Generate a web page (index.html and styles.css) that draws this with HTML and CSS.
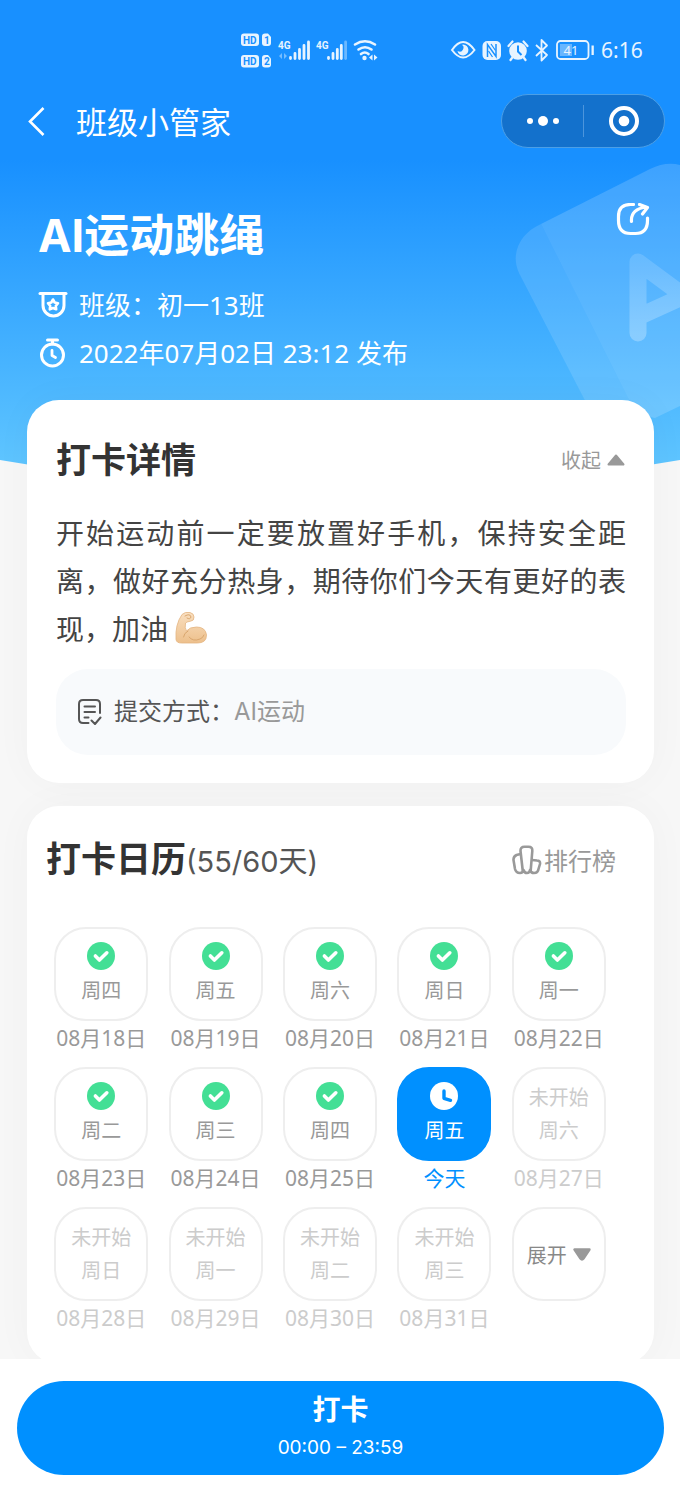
FILE: index.html
```html
<!DOCTYPE html>
<html lang="zh-CN">
<head>
<meta charset="utf-8">
<meta name="viewport" content="width=device-width, initial-scale=1">
<title>班级小管家</title>
<link rel="stylesheet" href="styles.css">
</head>
<body>
<svg class="defs" aria-hidden="true">
  <symbol id="done" viewBox="0 0 28 28"><circle cx="14" cy="14" r="14" fill="#43df95"/><path d="M8.400 14l4 4 7.400-7.200" fill="none" stroke="#fff" stroke-width="3.600" stroke-linecap="round" stroke-linejoin="round"/></symbol>
  <symbol id="clock" viewBox="0 0 28 28"><circle cx="14" cy="14" r="14" fill="#fff"/><path d="M14 9v7.300l6.500 2" fill="none" stroke="#0090ff" stroke-width="3.400" stroke-linecap="round" stroke-linejoin="round"/></symbol>
</svg>
<header class="hero">
  <svg class="hero-art" width="170" height="260" viewBox="510 160 170 260" aria-hidden="true">
    <defs><linearGradient id="ga" x1="0" y1="0" x2="0" y2="1"><stop offset="0" stop-color="#fff" stop-opacity=".14"/><stop offset="1" stop-color="#fff" stop-opacity=".26"/></linearGradient></defs>
    <path d="M541 224C520 233 510 254 519 273L592 414H636Z" fill="#fff" fill-opacity=".12"/>
    <path d="M541 224L650 169Q666 161 680 165V406L655 418L636 414Z" fill="#fff" fill-opacity=".16"/>
    <path d="M638 333V262L684 296L638 317" fill="none" stroke="url(#ga)" stroke-width="17" stroke-linecap="round" stroke-linejoin="round"/>
  </svg>
  <div class="status">
    <svg width="140" height="40" viewBox="240 30 140 40" aria-hidden="true">
      <g fill="#e8f4ff">
        <rect x="241" y="33.500" width="18" height="12.500" rx="3"/><path d="M262 36.500q0-3 3-3h3l3 3.500v6q0 3-3 3h-3q-3 0-3-3z"/>
        <rect x="241" y="55" width="18" height="12.500" rx="3"/><path d="M262 58q0-3 3-3h3l3 3.500v6q0 3-3 3h-3q-3 0-3-3z"/>
      </g>
      <g class="badge-text" fill="#1890ff"><text x="243" y="43.500">HD</text><text x="264" y="43.500">1</text><text x="243" y="65">HD</text><text x="264" y="65">2</text></g>
      <g class="net-text" fill="#e8f4ff"><text x="278" y="49">4G</text><text x="316" y="49">4G</text></g>
      <g stroke="#e8f4ff" stroke-width="2.800" stroke-linecap="round">
        <path d="M290.500 57.500v1M295 53.500v5M299.500 49.500v9M304 45.500v13M308.500 42v16.500M328.500 57.500v1M333 53.500v5M337.300 49.500v9M341.300 45.500v13"/>
        <path d="M345.600 42v16.500" opacity=".4"/>
      </g>
      <path d="M282 53v6l-3-3zM284 53v6l3-3z" fill="#e8f4ff" opacity=".45"/>
      <g fill="none" stroke="#e8f4ff" stroke-width="2.600" stroke-linecap="round"><path d="M355 44.500q10-6.500 20 0M358.500 49.500q6.500-4.500 13 0M361 54q3.800-3 7.500 0"/></g>
      <circle cx="364.500" cy="58" r="2.200" fill="#e8f4ff"/><path d="M372.500 54.500v6l-3.500-3zM374 54.500v6l3.500-3z" fill="#e8f4ff"/>
    </svg>
    <svg class="status-right" width="144" height="40" viewBox="450 30 144 40" role="img" aria-label="电量 41">
      <path d="M452 50q11-16 22.500 0q-11.500 15-22.500 0z" fill="none" stroke="#e8f4ff" stroke-width="2"/><path d="M463 44.500a5.500 5.500 0 1 1-5.500 6.500q4 2 5.500-1.500t-1-4.500z" fill="#e8f4ff"/>
      <rect x="482.500" y="41" width="18.500" height="19" rx="5" fill="#e8f4ff"/><path d="M487.500 57V44.500L496 56.500V44" fill="none" stroke="#1890ff" stroke-width="1.500"/><path d="M491 44l4.500 6.500M488.500 51l4 6" stroke="#1890ff" stroke-width="1.200"/>
      <circle cx="518" cy="51" r="8.800" fill="#e8f4ff"/><path d="M508.500 46l4-4.500M527.500 46l-4-4.500M512 58l-1.500 2M524 58l1.500 2" stroke="#e8f4ff" stroke-width="2.200" stroke-linecap="round"/><path d="M518 45.500v6l3.500 3.500" fill="none" stroke="#1890ff" stroke-width="2"/>
      <path d="M536 45l11 10-5.500 5.500V40l5.500 5.500L536 56" fill="none" stroke="#e8f4ff" stroke-width="1.800" stroke-linejoin="round"/>
      <rect x="557" y="41" width="31.500" height="18" rx="3.500" fill="none" stroke="#e8f4ff" stroke-width="1.800"/><rect x="560" y="44" width="12" height="12" fill="#fff" opacity=".35"/><rect x="591.500" y="45.500" width="2.300" height="9.500" fill="#e8f4ff"/>
      <text class="battery-text" x="563.500" y="55" fill="#e8f4ff">41</text>
    </svg>
    <time class="status-time">6:16</time>
  </div>
  <nav class="nav">
    <button class="icon-btn" type="button" aria-label="返回"><svg width="20" height="32" viewBox="0 0 20 32"><path d="M17.500 3L4 16.500 17.500 30" fill="none" stroke="#fff" stroke-width="2.600"/></svg></button>
    <span class="nav-title">班级小管家</span>
    <div class="capsule">
      <button class="icon-btn" type="button" aria-label="更多"><svg width="34" height="30" viewBox="0 0 34 30" fill="#fff"><circle cx="4" cy="15" r="3"/><circle cx="17" cy="15" r="5"/><circle cx="30" cy="15" r="3"/></svg></button>
      <button class="icon-btn" type="button" aria-label="关闭"><svg width="30" height="30" viewBox="0 0 30 30"><circle cx="15" cy="15" r="13" fill="none" stroke="#fff" stroke-width="4"/><circle cx="15" cy="15" r="5.300" fill="#fff"/></svg></button>
    </div>
  </nav>
  <div class="intro">
    <div class="intro-top">
      <h1>AI运动跳绳</h1>
      <button class="icon-btn share" type="button" aria-label="分享"><svg width="36" height="36" viewBox="616 203 36 36" fill="none" stroke="#fff" stroke-width="3.200" stroke-linecap="round" stroke-linejoin="round"><path d="M633.500 204.500h-3q-12 0-12 12v4q0 13 12 13h5q12 0 12-13v-2.500"/><path d="M631.500 221.500q-1-12.500 15-14.500M639.500 204.500l8 3-5 6.500"/></svg></button>
    </div>
    <p class="meta"><svg width="30" height="30" viewBox="0 0 30 30" fill="none" stroke="#fff" stroke-linecap="round" stroke-linejoin="round"><path d="M2 3.500h26" stroke-width="3"/><path d="M5 4v11.500a10.500 10.500 0 0 0 21 0V4" stroke-width="3"/><path d="M15 9.500l1.700 3 3.300.7-2.200 2.700.4 3.400L15 18l-3.200 1.300.4-3.400-2.200-2.700 3.300-.7z" stroke-width="2.600"/></svg><span>班级：初一13班</span></p>
    <p class="meta"><svg width="30" height="30" viewBox="0 0 30 30" fill="none" stroke="#fff" stroke-linecap="round" stroke-linejoin="round"><circle cx="14.500" cy="17" r="11" stroke-width="3"/><path d="M9.500 2h10M14.500 3v3" stroke-width="3"/><path d="M14 12.500v5l3.500 2" stroke-width="2.800"/></svg><span>2022年07月02日 23:12 发布</span></p>
  </div>
</header>
<main class="content">
  <section class="card detail">
    <div class="card-head">
      <h2>打卡详情</h2>
      <button class="text-btn" type="button">收起<svg width="18" height="12" viewBox="0 0 18 12"><path d="M9 1.500L16.500 10.500H1.500Z" fill="#999" stroke="#999" stroke-width="2" stroke-linejoin="round"/></svg></button>
    </div>
    <p class="desc">开始运动前一定要放置好手机，保持安全距离，做好充分热身，期待你们今天有更好的表现，加油 <svg class="arm" width="34" height="34" viewBox="176 611 34 34" role="img" aria-label="加油"><defs><linearGradient id="skin" x1="0" y1="0" x2="0" y2="1"><stop offset="0" stop-color="#f9dfc0"/><stop offset="1" stop-color="#edc08c"/></linearGradient></defs><path d="M184 614.500q3-3 8-2q4 1 4 4.500q0 4-3 4q-5 1-5.500 2q-1 5 1 8q3-4 10-4q9 0 10 8q0 8-9 8h-16q-5 0-5.500-3.500q-1-15 6-25z" fill="url(#skin)" stroke="#e3b480" stroke-width=".8"/><path d="M187 616q5-3 6 1q-1 3-4 1M190 631q-4 2-4.500 6M191 637q4 5 11 2q3-1 4-4" fill="none" stroke="#d9a66e" stroke-width="1" stroke-linecap="round"/></svg></p>
    <div class="method"><svg width="24" height="26" viewBox="0 0 24 26" fill="none" stroke="#555" stroke-width="2" stroke-linecap="round" stroke-linejoin="round"><path d="M10.500 24H5q-4 0-4-4V5q0-4 4-4h13q4 0 4 4v9"/><path d="M6.500 7.500h10.500M6.500 13h10.500M6.500 18.500h4M13.500 21.500l3.500 3.500 5.500-6.500"/></svg><span>提交方式：</span><span class="method-value">AI运动</span></div>
  </section>
  <section class="card calendar">
    <div class="card-head">
      <h2>打卡日历<span class="count">(55/60天)</span></h2>
      <button class="text-btn rank" type="button"><svg width="30" height="30" viewBox="0 0 30 30" fill="none" stroke="#999" stroke-width="2.600" stroke-linejoin="round"><path d="M11 28L8.500 6Q8.300 1.800 12.500 1.800h4Q20.700 1.800 20.300 6L18.500 28"/><path d="M8.500 9L4.500 10Q1.300 11.500 1.500 15L3 24Q4 28 8 28Q11 28 11.500 25Q12.500 28 15 28Q17.500 28 18 25Q19 28 22 28Q26 28 26.500 24L28 19Q28.500 15.500 25 15.500L20 15"/></svg>排行榜</button>
    </div>
    <ul class="days">
      <li><div class="day"><svg><use href="#done"/></svg><span>周四</span></div><time>08月18日</time></li>
      <li><div class="day"><svg><use href="#done"/></svg><span>周五</span></div><time>08月19日</time></li>
      <li><div class="day"><svg><use href="#done"/></svg><span>周六</span></div><time>08月20日</time></li>
      <li><div class="day"><svg><use href="#done"/></svg><span>周日</span></div><time>08月21日</time></li>
      <li><div class="day"><svg><use href="#done"/></svg><span>周一</span></div><time>08月22日</time></li>
      <li><div class="day"><svg><use href="#done"/></svg><span>周二</span></div><time>08月23日</time></li>
      <li><div class="day"><svg><use href="#done"/></svg><span>周三</span></div><time>08月24日</time></li>
      <li><div class="day"><svg><use href="#done"/></svg><span>周四</span></div><time>08月25日</time></li>
      <li class="today"><div class="day"><svg><use href="#clock"/></svg><span>周五</span></div><time>今天</time></li>
      <li class="future"><div class="day"><span>未开始</span><span>周六</span></div><time>08月27日</time></li>
      <li class="future"><div class="day"><span>未开始</span><span>周日</span></div><time>08月28日</time></li>
      <li class="future"><div class="day"><span>未开始</span><span>周一</span></div><time>08月29日</time></li>
      <li class="future"><div class="day"><span>未开始</span><span>周二</span></div><time>08月30日</time></li>
      <li class="future"><div class="day"><span>未开始</span><span>周三</span></div><time>08月31日</time></li>
      <li><button class="day expand" type="button">展开<svg class="caret" viewBox="0 0 18 13"><path d="M1.500 1.500H16.500L10.500 10.500Q9 12.500 7.500 10.500Z" fill="#999" stroke="#999" stroke-width="2.400" stroke-linejoin="round"/></svg></button></li>
    </ul>
  </section>
</main>
<footer class="footer">
  <button class="checkin" type="button"><strong>打卡</strong><span>00:00 – 23:59</span></button>
</footer>
</body>
</html>
```

FILE: styles.css
```css
* { box-sizing: border-box; }
body {
  margin: 0;
  background: #f7f7f7;
  color: #333;
  font-family: "Noto Sans CJK SC", sans-serif;
}
h1, h2, p, ul { margin: 0; padding: 0; }
button { margin: 0; padding: 0; border: 0; background: none; font: inherit; color: inherit; cursor: pointer; }
svg { display: block; flex: none; }
.defs { position: absolute; width: 0; height: 0; }

.hero {
  position: relative;
  padding-bottom: 111px;
  color: #fff;
  background: linear-gradient(#1890ff 0, #1890ff 160px, #60c6ff 470px);
  clip-path: ellipse(150% 100% at 50% 0);
}
.hero-art { position: absolute; top: 160px; right: 0; }

.status { display: flex; align-items: center; height: 80px; padding: 20px 35px 0 240px; }
.status-right { margin-left: auto; }
.status-time { width: 44px; margin-left: 7px; font: 21px/24px "Noto Sans", sans-serif; color: #e8f4ff; white-space: nowrap; }
.badge-text { font: 700 10px Roboto, sans-serif; }
.net-text { font: 700 10px Roboto, sans-serif; }
.battery-text { font: 400 13px "Noto Sans", sans-serif; }

.nav { position: relative; display: flex; align-items: center; height: 82px; padding: 0 15px 0 26px; }
.nav-title { margin-left: 30px; font-size: 31px; line-height: 48px; }
.capsule {
  display: flex;
  width: 164px;
  height: 54px;
  margin-left: auto;
  border: 1px solid #4c9fe6;
  border-radius: 27px;
  background: #1371cc;
}
.capsule .icon-btn { flex: 1; display: flex; align-items: center; justify-content: center; }
.capsule .icon-btn + .icon-btn { position: relative; }
.capsule .icon-btn + .icon-btn::before { content: ""; position: absolute; left: 0; top: 10px; bottom: 10px; width: 1px; background: #4c95dc; }

.intro { position: relative; padding: 41px 28px 0 38px; }
.intro-top { display: flex; justify-content: space-between; align-items: flex-start; margin-bottom: 12px; }
h1 { font-family: Inter, "Noto Sans CJK SC", sans-serif; font-size: 45px; line-height: 66px; font-weight: 700; }
.meta { display: flex; align-items: center; gap: 11px; height: 48px; font-family: "Noto Sans", "Noto Sans CJK SC", sans-serif; font-size: 26px; line-height: 36px; }

.content { position: relative; display: grid; gap: 23px; margin-top: -88px; padding: 0 26px 0 27px; }
.card { border-radius: 32px; background: #fff; box-shadow: 0 0 40px rgba(0, 0, 0, .03); }
.detail { padding: 30px 28px 28px 29px; }
.card-head { display: flex; align-items: center; justify-content: space-between; height: 60px; }
h2 { font-family: Inter, "Noto Sans CJK SC", sans-serif; font-size: 35px; line-height: 60px; font-weight: 700; }
.text-btn { display: flex; align-items: center; gap: 6px; font-size: 20px; line-height: 30px; color: #999; }
.detail .text-btn { padding-right: 1px; }
.desc { margin-top: 18px; font-size: 28px; line-height: 48px; color: #444; text-align: justify; }
.arm { display: inline-block; vertical-align: -5px; }
.method {
  display: flex;
  align-items: center;
  height: 86px;
  margin-top: 17px;
  padding: 0 22px;
  border-radius: 32px;
  background: #f8fafc;
  font-family: Inter, "Noto Sans CJK SC", sans-serif;
  font-size: 24px;
  line-height: 36px;
  color: #555;
}
.method span:first-of-type { margin-left: 12px; }
.method-value { color: #999; }

.calendar { padding: 24px 38px 28px 17px; }
.calendar .card-head { padding-left: 2px; }
.count { font-size: 29px; font-weight: 400; color: #555; }
.rank { gap: 2px; font-size: 24px; }
.days { display: grid; grid-template-columns: repeat(5, 1fr); row-gap: 11px; margin-top: 37px; list-style: none; }
.days li { display: flex; flex-direction: column; align-items: center; font-size: 20px; color: #999; }
.day {
  display: flex;
  flex-direction: column;
  align-items: center;
  width: 94px;
  height: 94px;
  padding-top: 13px;
  border: 2px solid #eee;
  border-radius: 32px;
  line-height: 39px;
}
.day svg { width: 28px; height: 28px; }
.days time { font-family: "Noto Sans", "Noto Sans CJK SC", sans-serif; font-size: 21px; line-height: 35px; white-space: nowrap; }
.days .today { color: #0090ff; }
.today .day { border-color: #0090ff; background: #0090ff; color: #fff; }
.days .future { color: #ccc; }
.future .day { padding-top: 11px; line-height: 33px; }
.expand { flex-direction: row; justify-content: center; gap: 6px; padding-top: 0; color: #888; }
.day .caret { width: 18px; height: 13px; }

.footer { position: relative; margin-top: -5px; padding: 22px 16px 21px 17px; background: #fff; }
.checkin {
  display: flex;
  flex-direction: column;
  align-items: center;
  width: 100%;
  padding: 7px 0 12px;
  border-radius: 47px;
  background: #0090ff;
  color: #fff;
  font-family: Inter, "Noto Sans CJK SC", sans-serif;
}
.checkin strong { font-size: 28px; line-height: 44px; }
.checkin span { font-size: 19px; line-height: 31px; }
```
